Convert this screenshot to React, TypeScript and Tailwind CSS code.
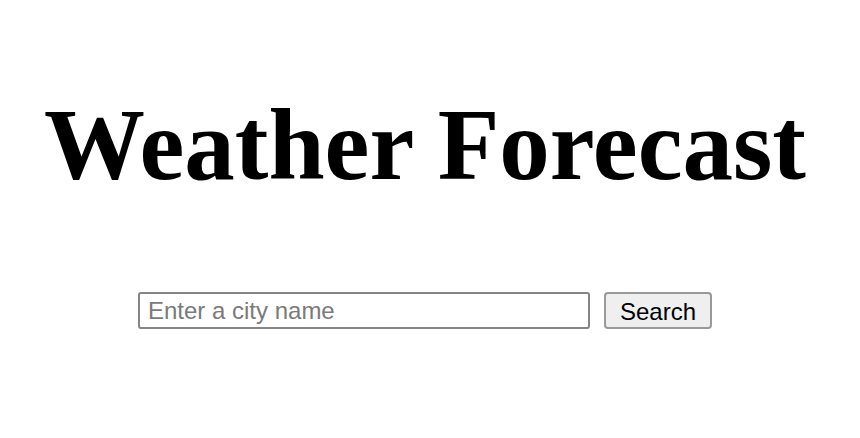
export default function App() {
  return (
    <div className="min-h-screen bg-white flex flex-col items-center pr-[10px] font-['Liberation_Serif',serif]">
      <h1 className="mt-[85px] text-[101px] leading-[120px] font-bold text-black font-['Liberation_Serif',serif]">
        Weather Forecast
      </h1>
      <div className="mt-[87px] flex items-center gap-[14px] font-['Liberation_Sans',Arial,sans-serif]">
        <input
          type="text"
          placeholder="Enter a city name"
          className="w-[452px] h-[37px] px-[8px] text-[24px] border-2 border-[#858585] rounded-[3px] placeholder:text-[#7a7a7a] outline-none"
        />
        <button className="h-[37px] px-[14px] text-[24px] text-black bg-[#efefef] border-2 border-[#999999] rounded-[4px]">
          Search
        </button>
      </div>
    </div>
  );
}
